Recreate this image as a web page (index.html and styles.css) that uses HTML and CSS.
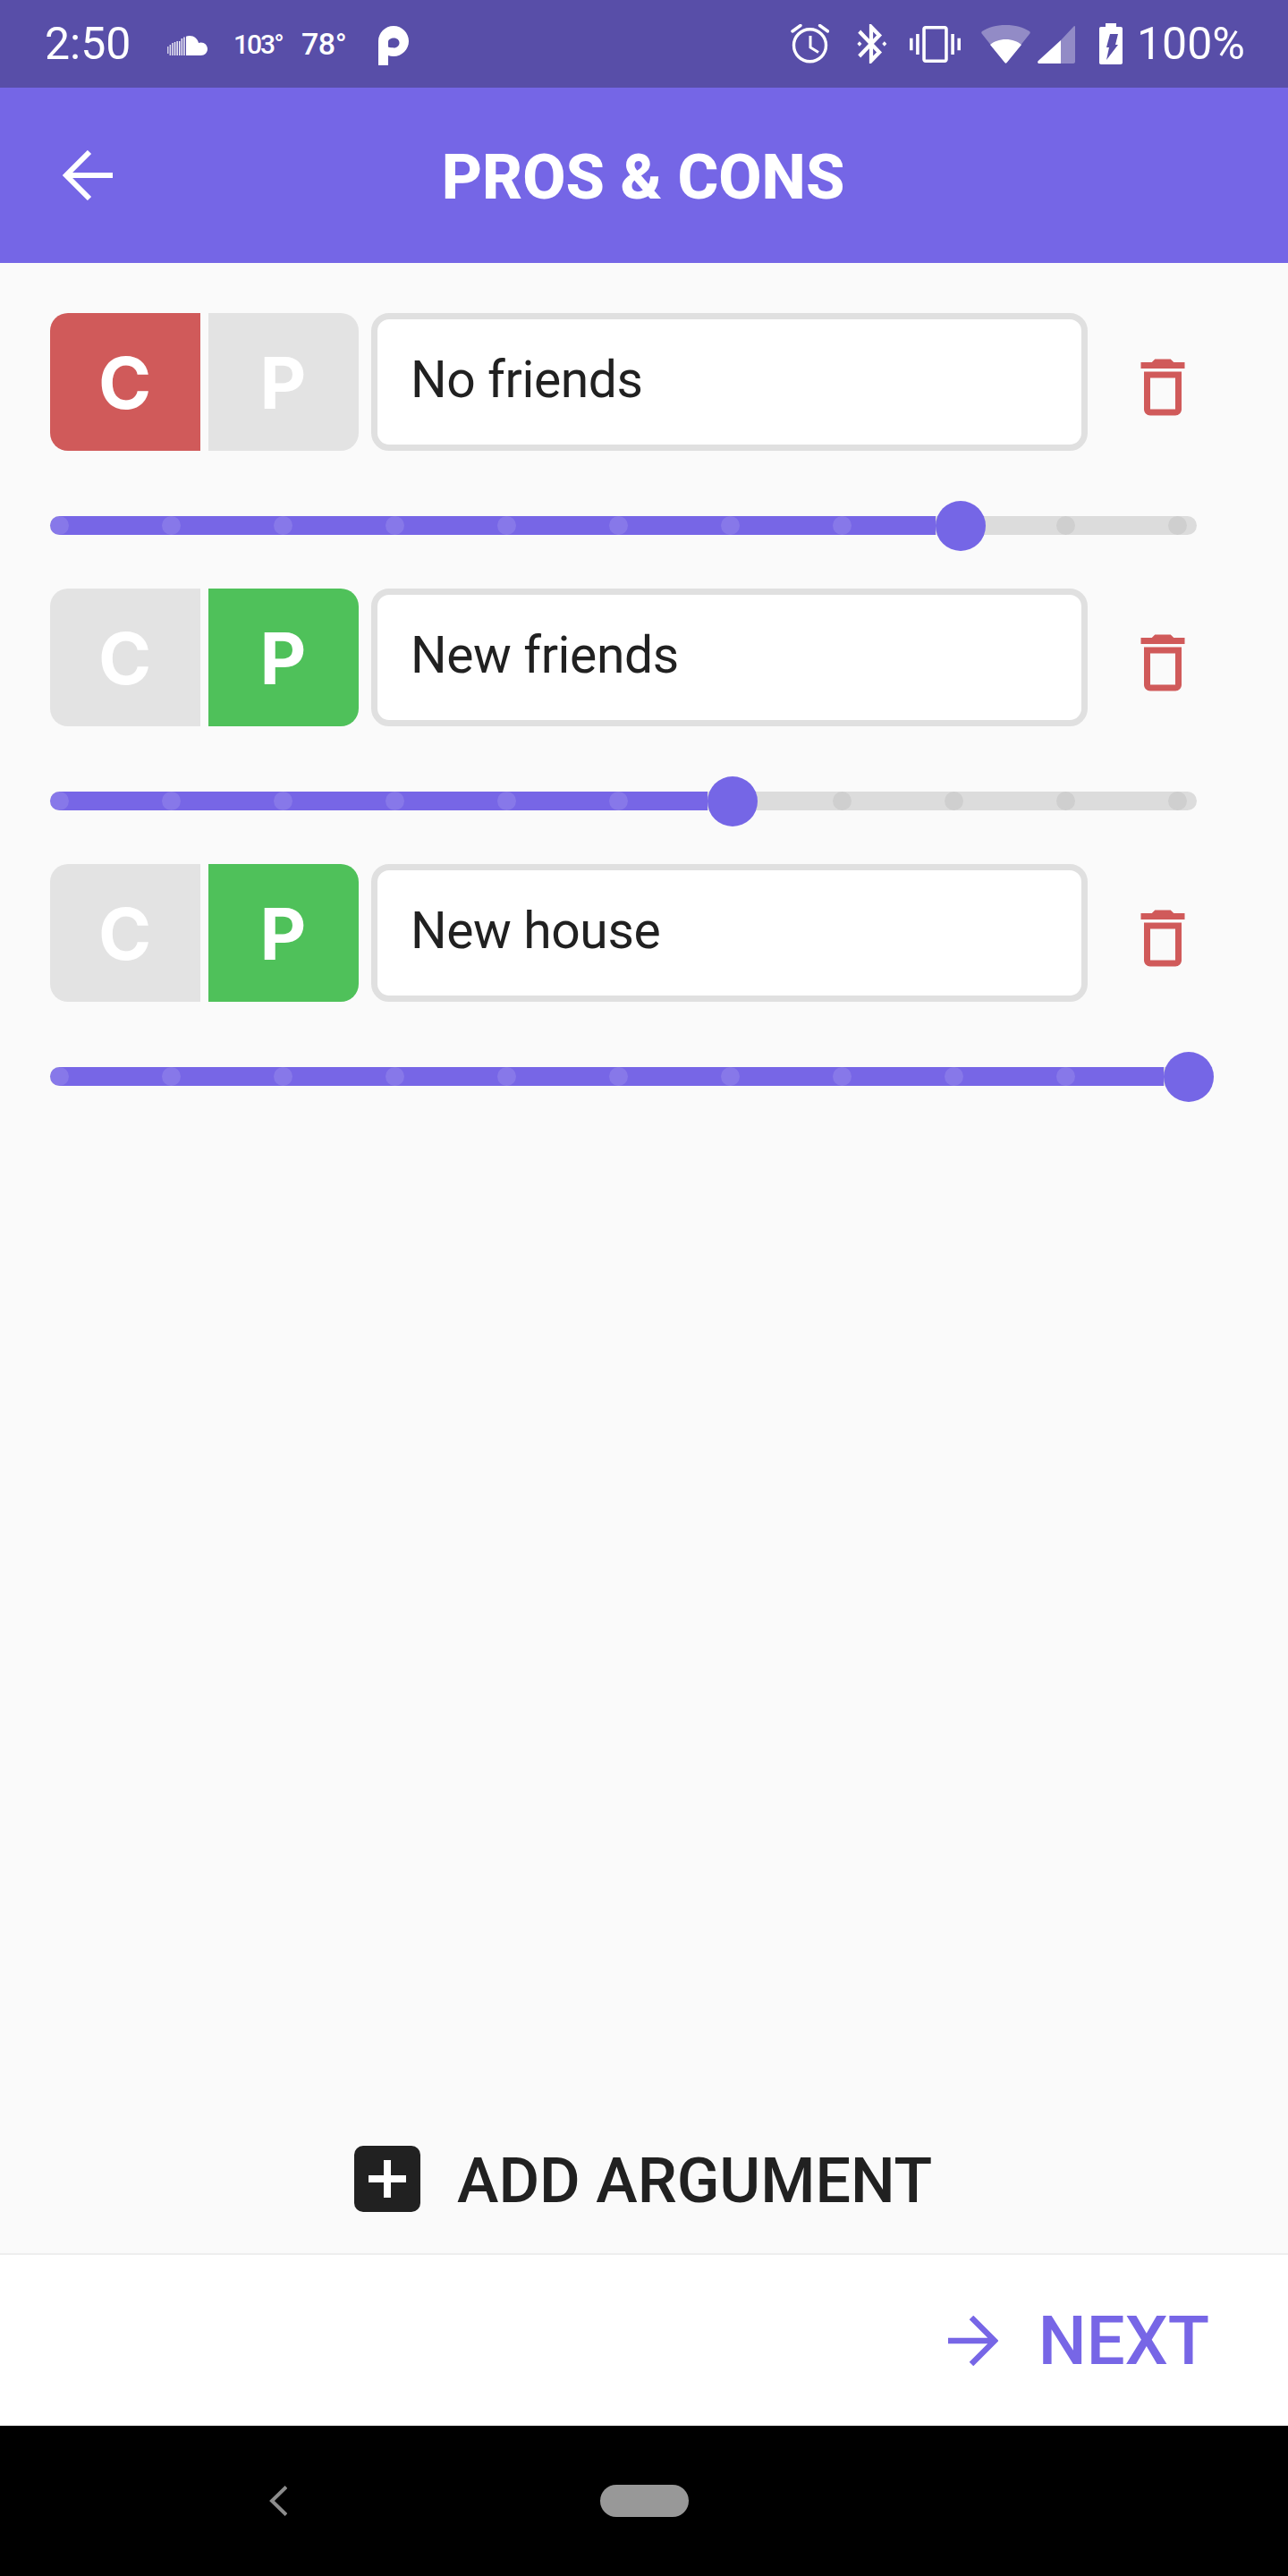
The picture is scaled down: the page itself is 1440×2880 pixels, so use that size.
FILE: index.html
```html
<!DOCTYPE html>
<html lang="en">
<head>
    <meta charset="UTF-8">
    <meta name="viewport" content="width=device-width, initial-scale=1.0">
    <title>Pros &amp; Cons</title>
    <link rel="stylesheet" href="styles.css">
</head>
<body>
    <div class="screen">
        <div class="status-bar">
            <span class="clock">2:50</span>
            <svg class="ic-cloud" viewBox="0 0 45 22" fill="#fff">
                <rect x="0" y="12" width="1.5" height="8" opacity=".7"/>
                <rect x="2.6" y="10" width="1.5" height="12" opacity=".8"/>
                <rect x="5.2" y="8" width="1.5" height="14" opacity=".85"/>
                <rect x="7.8" y="7" width="1.5" height="15" opacity=".9"/>
                <rect x="10.4" y="6" width="1.5" height="16" opacity=".9"/>
                <rect x="13" y="6" width="1.5" height="16" opacity=".9"/>
                <rect x="15.6" y="3" width="1.5" height="19" opacity=".9"/>
                <rect x="18.2" y="1.5" width="1.5" height="20.5" opacity=".9"/>
                <path d="M21 22V.8C22 .3 23.4 0 25 0c5 0 9 3.4 10 8 .8-.3 1.700-.5 2.600-.5 4.200 0 7.400 3.200 7.400 7.300S41.800 22 37.600 22z"/>
            </svg>
            <span class="temp-a">103°</span>
            <span class="temp-b">78°</span>
            <svg class="ic-p" viewBox="0 0 34 44" fill="#fff">
                <path fill-rule="evenodd" d="M0 44V17C0 7.600 7.600 0 17 0s17 7.600 17 17-7.600 17-17 17c-2.200 0-4.200-.4-6-1v11zM17.500 13.500c-3.500 0-6.500 1.500-6.500 4.500v5.500c2 .6 4 .9 6.500.9 3.500 0 6-2.600 6-5.500s-2.500-5.400-6-5.400z"/>
            </svg>
            <span class="status-gap"></span>
            <svg class="ic-alarm" viewBox="0 0 43 44" fill="none" stroke="#fff" stroke-width="3.400">
                <circle cx="21.500" cy="23.700" r="18"/>
                <path d="M22 13v13l9 5.500" stroke-width="3"/>
                <path d="M2 8l9-6.500M41.500 8l-9-6.500" stroke-linecap="round"/>
            </svg>
            <svg class="ic-bt" viewBox="3 2 18 20" preserveAspectRatio="none" fill="#fff">
                <path d="M7 12l-1.200-1.200L4.600 12l1.200 1.200L7 12zm10.710-4.290L12 2h-1v7.590L6.410 5 5 6.410 10.590 12 5 17.590 6.410 19 11 14.410V22h1l5.710-5.710-4.300-4.290 4.300-4.290zM13 5.830l1.880 1.880L13 9.590V5.830zm1.880 10.460L13 18.170v-3.760l1.880 1.880zM19 10.800L17.800 12l1.200 1.200 1.200-1.200-1.200-1.200z"/>
            </svg>
            <svg class="ic-vib" viewBox="0 3 24 18" preserveAspectRatio="none" fill="#fff">
                <path d="M0 15h1.500V9H0v6zm3 2h1.500V7H3v10zm19.500-8v6H24V9h-1.500zm-3 8H21V7h-1.500v10zM16.500 3h-9C6.670 3 6 3.670 6 4.500v15c0 .83.67 1.500 1.500 1.500h9c.83 0 1.500-.67 1.500-1.500v-15c0-.83-.67-1.500-1.500-1.500zM16.500 19.500h-9v-15h9v15z"/>
            </svg>
            <svg class="ic-wifi" viewBox="0 0 55 43" fill="#fff">
                <path opacity=".35" d="M1 10c-1-1-1-2 0-3C8 2.500 17 0 27.500 0S47 2.500 54 7c1 1 1 2 0 3L29 41.500c-.8 1.500-2.200 1.500-3 0z"/>
                <path d="M10 22c4-3.500 10.500-6 17.500-6S41 18.500 45 22L29 41.500c-.8 1.500-2.200 1.500-3 0z"/>
            </svg>
            <svg class="ic-signal" viewBox="0 0 42 42" fill="#fff">
                <path opacity=".35" d="M26 16L41 0c.5 0 1 .5 1 1v39c0 1-1 2-2 2H26z"/>
                <path d="M26 16v26H2c-2 0-2.500-2-1.200-3z"/>
            </svg>
            <svg class="ic-batt" viewBox="0 0 26 46" fill="#fff">
                <path fill-rule="evenodd" d="M7 0h12v4h5c1.200 0 2 .8 2 2v38c0 1.200-.8 2-2 2H2c-1.200 0-2-.8-2-2V6c0-1.200.8-2 2-2h5zM12 12h9l-3 12h3L8 41l3-14H8z"/>
            </svg>
            <span class="batt-text">100%</span>
        </div>

        <div class="app-bar">
            <svg class="back-arrow" viewBox="0 0 56 56" fill="none" stroke="#fff" stroke-width="6">
                <path d="M56 28H4M30 2L4 28l26 26"/>
            </svg>
            <h1>PROS &amp; CONS</h1>
        </div>

        <div class="content">
            <div class="argument">
                <div class="arg-row">
                    <div class="toggle">
                        <div class="opt opt-left con">C</div>
                        <div class="opt opt-right">P</div>
                    </div>
                    <div class="arg-input">No friends</div>
                    <svg class="trash" viewBox="0 0 24 24" fill="#d05a5a">
                        <path d="M6 19c0 1.100.9 2 2 2h8c1.100 0 2-.9 2-2V7H6v12zM8 9h8v10H8V9zm7.500-5l-1-1h-5l-1 1H5v2h14V4h-3.500z"/>
                    </svg>
                </div>
                <div class="slider">
                    <div class="fill" style="width: 990px"></div>
                    <div class="ticks">
                        <i class="on"></i><i class="on"></i><i class="on"></i><i class="on"></i><i class="on"></i><i class="on"></i><i class="on"></i><i class="on"></i><i class="on"></i><i></i><i></i>
                    </div>
                    <div class="thumb" style="left: 990px"></div>
                </div>
            </div>

            <div class="argument">
                <div class="arg-row">
                    <div class="toggle">
                        <div class="opt opt-left">C</div>
                        <div class="opt opt-right pro">P</div>
                    </div>
                    <div class="arg-input">New friends</div>
                    <svg class="trash" viewBox="0 0 24 24" fill="#d05a5a">
                        <path d="M6 19c0 1.100.9 2 2 2h8c1.100 0 2-.9 2-2V7H6v12zM8 9h8v10H8V9zm7.500-5l-1-1h-5l-1 1H5v2h14V4h-3.500z"/>
                    </svg>
                </div>
                <div class="slider">
                    <div class="fill" style="width: 735px"></div>
                    <div class="ticks">
                        <i class="on"></i><i class="on"></i><i class="on"></i><i class="on"></i><i class="on"></i><i class="on"></i><i class="on"></i><i></i><i></i><i></i><i></i>
                    </div>
                    <div class="thumb" style="left: 735px"></div>
                </div>
            </div>

            <div class="argument">
                <div class="arg-row">
                    <div class="toggle">
                        <div class="opt opt-left">C</div>
                        <div class="opt opt-right pro">P</div>
                    </div>
                    <div class="arg-input">New house</div>
                    <svg class="trash" viewBox="0 0 24 24" fill="#d05a5a">
                        <path d="M6 19c0 1.100.9 2 2 2h8c1.100 0 2-.9 2-2V7H6v12zM8 9h8v10H8V9zm7.500-5l-1-1h-5l-1 1H5v2h14V4h-3.500z"/>
                    </svg>
                </div>
                <div class="slider">
                    <div class="fill" style="width: 1245px"></div>
                    <div class="ticks">
                        <i class="on"></i><i class="on"></i><i class="on"></i><i class="on"></i><i class="on"></i><i class="on"></i><i class="on"></i><i class="on"></i><i class="on"></i><i class="on"></i><i class="on"></i>
                    </div>
                    <div class="thumb" style="left: 1245px"></div>
                </div>
            </div>

            <div class="add-arg">
                <svg class="add-icon" viewBox="0 0 74 74">
                    <rect width="74" height="74" rx="10" fill="#212121"/>
                    <path d="M33 16h8v17h17v8H41v17h-8V41H16v-8h17z" fill="#fff"/>
                </svg>
                <span>ADD ARGUMENT</span>
            </div>
        </div>

        <div class="footer">
            <svg class="next-arrow" viewBox="0 0 56 56" fill="none" stroke="#7766e6" stroke-width="6.500">
                <path d="M0 28h52M26 2l26 26-26 26"/>
            </svg>
            <span class="next-label">NEXT</span>
        </div>

        <div class="nav-bar">
            <svg class="nav-back" viewBox="0 0 20 34" fill="none" stroke="#8c8c8c" stroke-width="4">
                <path d="M19 1.500L3 17l16 15.500"/>
            </svg>
            <div class="nav-pill"></div>
        </div>
    </div>
</body>
</html>
```

FILE: styles.css
```css
* {
    box-sizing: border-box;
}
body {
    margin: 0;
    font-family: Roboto, "Liberation Sans", sans-serif;
    background: #fafafa;
}
.screen {
    width: 1440px;
    height: 2880px;
    display: flex;
    flex-direction: column;
}

/* status bar */
.status-bar {
    height: 98px;
    flex-shrink: 0;
    background: #584ea8;
    color: #fff;
    display: flex;
    align-items: center;
    padding-left: 50px;
}
.status-bar svg {
    display: block;
    flex-shrink: 0;
}
.clock {
    font-size: 50px;
    width: 95px;
}
.ic-cloud {
    width: 45px;
    height: 22px;
    margin-left: 42px;
    margin-top: 3px;
}
.temp-a {
    font-size: 30px;
    font-weight: 500;
    margin-left: 29px;
    width: 52px;
    letter-spacing: -2px;
    margin-top: 1px;
}
.temp-b {
    font-size: 34px;
    font-weight: 500;
    margin-left: 24px;
    width: 51px;
    letter-spacing: -.5px;
    margin-top: -1px;
}
.ic-p {
    width: 34px;
    height: 44px;
    margin-left: 35px;
    margin-top: 3px;
}
.status-gap {
    width: 427px;
}
.ic-alarm {
    width: 43px;
    height: 44px;
}
.ic-bt {
    width: 38px;
    height: 44px;
    margin-left: 28px;
}
.ic-vib {
    width: 57px;
    height: 41px;
    margin-left: 24px;
}
.ic-wifi {
    width: 55px;
    height: 43px;
    margin-left: 23px;
}
.ic-signal {
    width: 42px;
    height: 42px;
    margin-left: 8px;
    margin-top: 2px;
}
.ic-batt {
    width: 26px;
    height: 46px;
    margin-left: 27px;
}
.batt-text {
    font-size: 50px;
    margin-left: 16px;
}

/* app bar */
.app-bar {
    height: 196px;
    flex-shrink: 0;
    background: #7566e6;
    display: flex;
    align-items: center;
    justify-content: center;
    position: relative;
    padding: 3px 2px 0 0;
}
.app-bar h1 {
    margin: 0;
    color: #fff;
    font-size: 70px;
    font-weight: 800;
}
.back-arrow {
    position: absolute;
    left: 70px;
    top: 70px;
    width: 56px;
    height: 56px;
}

/* arguments */
.content {
    flex: 1;
    display: flex;
    flex-direction: column;
    padding: 56px 0 0 56px;
    background: #fafafa;
}
.argument {
    margin-bottom: 60px;
}
.arg-row {
    display: flex;
    height: 154px;
}
.toggle {
    display: flex;
    gap: 9px;
}
.opt {
    width: 168px;
    height: 154px;
    background: #e3e3e3;
    color: #fff;
    font-family: Inter, Roboto, sans-serif;
    font-size: 80px;
    font-weight: 700;
    display: flex;
    align-items: center;
    justify-content: center;
    padding-right: 1px;
}
.opt-left {
    border-radius: 20px 0 0 20px;
}
.opt-right {
    border-radius: 0 20px 20px 0;
}
.opt.con {
    background: #d05a5a;
}
.opt.pro {
    background: #4fc15a;
}
.arg-input {
    width: 801px;
    height: 154px;
    margin-left: 14px;
    background: #fff;
    border: 7px solid #e0e0e0;
    border-radius: 20px;
    color: #212121;
    font-size: 57px;
    letter-spacing: -.4px;
    padding: 0 0 6px 37px;
    display: flex;
    align-items: center;
}
.trash {
    width: 84px;
    height: 84px;
    margin: 41px 0 0 42px;
}

/* slider */
.slider {
    position: relative;
    width: 1282px;
    height: 21px;
    margin-top: 73px;
    background: #dcdcdc;
    border-radius: 11px;
}
.fill {
    height: 21px;
    background: #7766e6;
    border-radius: 11px 0 0 11px;
}
.ticks {
    position: absolute;
    left: 0;
    top: 0;
    right: 11px;
    display: flex;
    justify-content: space-between;
}
.ticks i {
    width: 21px;
    height: 21px;
    border-radius: 50%;
    background: rgba(0, 0, 0, .06);
}
.ticks i.on {
    background: rgba(255, 255, 255, .12);
}
.thumb {
    position: absolute;
    top: -17.5px;
    width: 56px;
    height: 56px;
    border-radius: 50%;
    background: #7566e6;
}

/* add button */
.add-arg {
    margin-top: auto;
    height: 194px;
    margin-left: -56px;
    display: flex;
    align-items: flex-start;
    padding: 74px 0 0 396px;
    color: #212121;
    font-size: 70px;
    font-weight: 500;
}
.add-icon {
    width: 74px;
    height: 74px;
    flex-shrink: 0;
}
.add-arg span {
    margin-left: 41px;
    line-height: 78px;
}

/* footer */
.footer {
    height: 193px;
    flex-shrink: 0;
    background: #fff;
    border-top: 2px solid #eeeeee;
    display: flex;
    align-items: center;
    justify-content: flex-end;
    padding-right: 88px;
}
.next-arrow {
    width: 56px;
    height: 56px;
    margin-right: 45px;
}
.next-label {
    font-size: 76px;
    font-weight: 500;
    color: #7766e6;
}

/* nav bar */
.nav-bar {
    height: 168px;
    flex-shrink: 0;
    background: #000;
    position: relative;
}
.nav-back {
    position: absolute;
    left: 301px;
    top: 67px;
    width: 20px;
    height: 34px;
}
.nav-pill {
    position: absolute;
    left: 671px;
    top: 66px;
    width: 99px;
    height: 36px;
    border-radius: 18px;
    background: #989898;
}
```
